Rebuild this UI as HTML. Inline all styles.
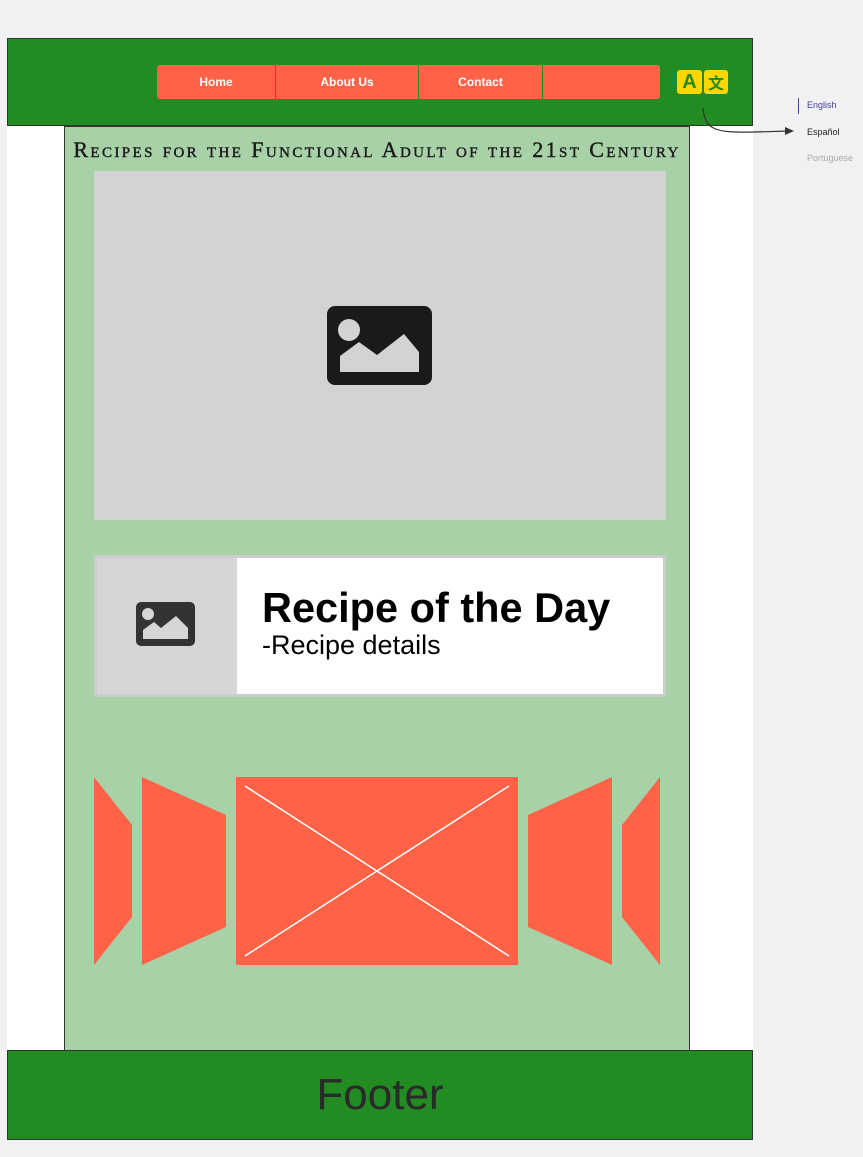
<!DOCTYPE html>
<html><head><style>
body{margin:0;width:863px;height:1157px;background:#f1f1f1;position:relative;font-family:"Liberation Sans",sans-serif;overflow:hidden}
.a{position:absolute}
.nav div{position:absolute;top:0;height:34px;line-height:34px;background:#ff6347;color:#fff;font-size:12px;font-weight:bold;text-align:center}
</style></head><body>
<div class="a" style="left:7px;top:38px;width:746px;height:1101px;background:#fff"></div>
<div class="a" style="left:7px;top:38px;width:744px;height:86px;background:#228b22;border:1px solid #2a3a2a"></div>
<div class="a nav" style="left:157px;top:65px;width:503px;height:34px">
<div style="left:0;width:118px;border-radius:3px 0 0 3px">Home</div>
<div style="left:119px;width:142px">About Us</div>
<div style="left:262px;width:123px">Contact</div>
<div style="left:386px;width:117px;border-radius:0 3px 3px 0"></div>
</div>
<div class="a" style="left:677px;top:70px;width:25px;height:24px;background:#ffd700;border-radius:3px;color:#228b22;font-weight:bold;font-size:20px;text-align:center;line-height:24px">A</div>
<div class="a" style="left:704px;top:70px;width:24px;height:24px;background:#ffd700;border-radius:3px;color:#228b22;font-weight:bold;font-size:16px;text-align:center;line-height:24px;font-family:'Noto Sans CJK SC',sans-serif">文</div>
<svg class="a" style="left:695px;top:100px" width="110" height="40"><path d="M8 8 C10 30 20 33 60 32 L95 31" fill="none" stroke="#333" stroke-width="1.2"/><path d="M90 27 L99 31 L90 35Z" fill="#333"/></svg>
<div class="a" style="left:798px;top:98px;width:1px;height:16px;background:#3f3f9f"></div>
<div class="a" style="left:807px;top:100px;font-size:9px;color:#3f3f9f">English</div>
<div class="a" style="left:807px;top:127px;font-size:9px;color:#222">Español</div>
<div class="a" style="left:807px;top:153px;font-size:9px;color:#aaa">Portuguese</div>
<div class="a" style="left:64px;top:126px;width:624px;height:923px;background:#a8d1a8;border:1px solid #333"></div>
<div class="a" style="left:64px;top:137px;width:626px;text-align:center;font-family:'Liberation Serif',serif;font-variant:small-caps;font-size:22px;letter-spacing:2.4px;color:#1a1a1a;white-space:nowrap;-webkit-text-stroke:0.4px #1a1a1a">Recipes for the Functional Adult of the 21st Century</div>
<div class="a" style="left:94px;top:171px;width:572px;height:349px;background:#d3d3d3"></div>
<svg class="a" style="left:327px;top:306px" width="105" height="79" viewBox="0 0 105 79"><rect width="105" height="79" rx="8" fill="#1a1a1a"/><circle cx="22" cy="24" r="11" fill="#d3d3d3"/><path d="M13 66 V50 L32 36 L50 49 L77 28 L92 46 V66Z" fill="#d3d3d3"/></svg>
<div class="a" style="left:94px;top:555px;width:566px;height:136px;background:#fff;border:3px solid #ccc"></div>
<div class="a" style="left:97px;top:558px;width:140px;height:136px;background:#d6d6d6"></div>
<svg class="a" style="left:136px;top:602px" width="59" height="44" viewBox="0 0 59 44"><rect width="59" height="44" rx="5" fill="#333"/><circle cx="12" cy="12" r="6" fill="#d6d6d6"/><path d="M7 37 V28 L18 20 L25 26 L40 14 L52 26 V37Z" fill="#d6d6d6"/></svg>
<div class="a" style="left:262px;top:584px;font-size:41.5px;font-weight:bold;color:#000">Recipe of the Day</div>
<div class="a" style="left:262px;top:630px;font-size:27px;color:#000">-Recipe details</div>
<svg class="a" style="left:94px;top:777px" width="566" height="189">
<g fill="#ff6347"><path d="M0 0 L38 48 V140 L0 188Z"/><path d="M48 0 L132 38 V150 L48 188Z"/><rect x="142" y="0" width="282" height="188"/><path d="M518 0 L434 38 V150 L518 188Z"/><path d="M566 0 L528 48 V140 L566 188Z"/></g>
<path d="M151 9 L415 179 M415 9 L151 179" stroke="#fff" stroke-width="1.5"/>
</svg>
<div class="a" style="left:7px;top:1050px;width:744px;height:88px;background:#228b22;border:1px solid #2a3a2a"></div>
<div class="a" style="left:7px;top:1070px;width:746px;text-align:center;font-size:44px;color:#2a2a2a">Footer</div>
</body></html>
